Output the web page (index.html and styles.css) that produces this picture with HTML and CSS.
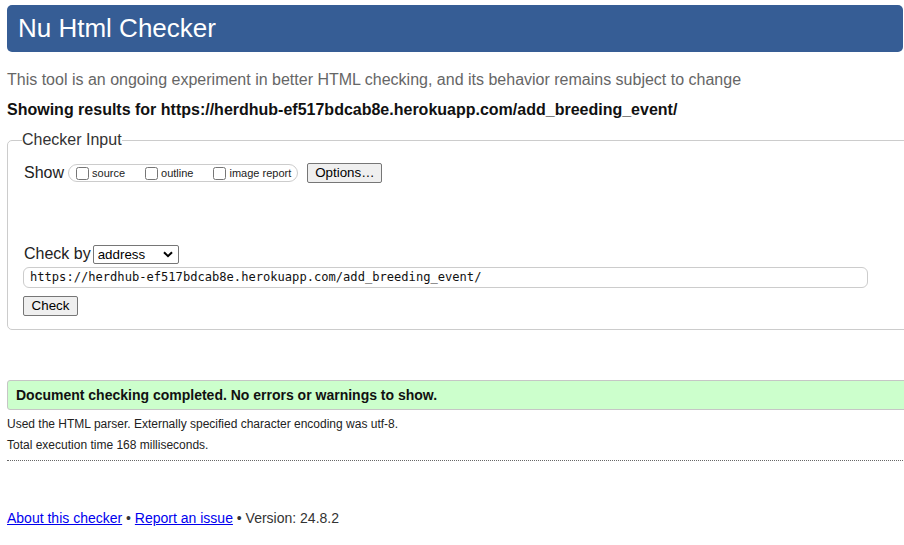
FILE: index.html
```html
<!DOCTYPE html>
<html lang="en">
<head>
<meta charset="utf-8">
<title>Showing results for https://herdhub-ef517bdcab8e.herokuapp.com/add_breeding_event/ - Nu Html Checker</title>
<link rel="stylesheet" href="styles.css">
</head>
<body>
<div class="page">
  <h1 class="title">Nu Html Checker</h1>
  <p class="intro">This tool is an ongoing experiment in better HTML checking, and its behavior remains subject to change</p>
  <p class="showing">Showing results for https://herdhub-ef517bdcab8e.herokuapp.com/add_breeding_event/</p>
  <form class="checker">
    <fieldset class="inputs">
      <legend class="legend">Checker Input</legend>
      <div class="show-row">
        <span class="lbl">Show</span>
        <span class="pill">
          <label class="opt"><input type="checkbox" class="cb"><span>source</span></label>
          <label class="opt"><input type="checkbox" class="cb"><span>outline</span></label>
          <label class="opt last"><input type="checkbox" class="cb"><span>image report</span></label>
        </span>
        <button type="button" class="btn options">Options…</button>
      </div>
      <div class="by-row">
        <span class="lbl">Check by</span>
        <span class="select">address<svg class="chev" width="10" height="7" viewBox="0 0 10 7"><path d="M1 1.2 L5 5.2 L9 1.2" fill="none" stroke="#000" stroke-width="2"/></svg></span>
      </div>
      <div class="url">https://herdhub-ef517bdcab8e.herokuapp.com/add_breeding_event/</div>
      <div class="submit-row"><button type="button" class="btn check">Check</button></div>
    </fieldset>
  </form>
  <div class="success">Document checking completed. No errors or warnings to show.</div>
  <p class="meta first">Used the HTML parser. Externally specified character encoding was utf-8.</p>
  <p class="meta">Total execution time 168 milliseconds.</p>
  <hr class="dotted">
  <p class="footer"><a href="#" class="link">About this checker</a> • <a href="#" class="link">Report an issue</a> • Version: 24.8.2</p>
</div>
</body>
</html>
```
FILE: styles.css
```css
html, body {
  margin: 0;
  padding: 0;
  overflow: hidden;
  background: #fff;
}
body {
  font-family: "Liberation Sans", Arial, sans-serif;
  color: #222;
}
.page {
  box-sizing: border-box;
  padding: 5px 0 0 7px;
  width: 904px;
  overflow: hidden;
}
.title {
  box-sizing: border-box;
  width: 896px;
  height: 47px;
  margin: 0;
  padding: 0 0 0 11px;
  background: #365d95;
  color: #fff;
  font-weight: normal;
  font-size: 26px;
  line-height: 47px;
  border-radius: 5px;
}
.intro {
  margin: 19px 0 0 0;
  font-size: 16px;
  line-height: 18px;
  color: #666;
}
.showing {
  margin: 12px 0 0 0;
  font-size: 16px;
  line-height: 18px;
  font-weight: bold;
  color: #111;
}
.checker {
  margin: 12px 0 0 0;
}
.inputs {
  margin: 0;
  padding: 14px 16px 13px 16px;
  border: 1px solid #ccc;
  border-radius: 5px;
  min-width: 0;
  width: 1000px;
}
.legend {
  padding: 0;
  margin-left: -2px;
  font-size: 16px;
  line-height: 18px;
  color: #333;
}
.show-row {
  display: flex;
  align-items: center;
  height: 20px;
}
.lbl {
  font-size: 16px;
  line-height: 18px;
  color: #222;
}
.pill {
  display: flex;
  align-items: center;
  box-sizing: border-box;
  height: 18px;
  margin-left: 4px;
  padding: 0 6px 0 3px;
  border: 1px solid #ccc;
  border-radius: 9px;
}
.opt {
  display: flex;
  align-items: center;
  font-size: 11px;
  color: #222;
  margin-right: 16px;
}
.opt.last {
  margin-right: 0;
}
.cb {
  width: 13px;
  height: 13px;
  margin: 0 3px 0 4px;
}
.btn {
  box-sizing: border-box;
  height: 20px;
  border: 1px solid #767676;
  border-radius: 2px;
  background: #efefef;
  color: #000;
  font-family: "Liberation Sans", Arial, sans-serif;
  font-size: 13.33px;
  line-height: 16px;
  padding: 0 7px;
}
.options {
  margin-left: 9px;
  width: 75px;
}
.by-row {
  display: flex;
  align-items: center;
  margin-top: 61px;
  height: 20px;
}
.select {
  display: flex;
  align-items: center;
  justify-content: space-between;
  box-sizing: border-box;
  width: 86px;
  height: 19px;
  margin-left: 2px;
  padding: 0 5px 0 4px;
  border: 1px solid #767676;
  border-radius: 2px;
  font-size: 13.33px;
  color: #000;
}
.chev {
  display: block;
}
.url {
  box-sizing: border-box;
  width: 845px;
  height: 21px;
  margin: 3px 0 0 -1px;
  padding: 0 0 0 6px;
  border: 1px solid #ccc;
  border-radius: 6px;
  font-family: "DejaVu Sans Mono", "Liberation Mono", monospace;
  font-size: 12.1px;
  line-height: 19px;
  color: #111;
}
.submit-row {
  margin-top: 8px;
  margin-left: -1px;
  display: flex;
}
.check {
  width: 55px;
  padding: 0;
}
.success {
  box-sizing: border-box;
  width: 1000px;
  height: 30px;
  margin-top: 50px;
  padding: 0 0 0 8px;
  background: #ccffcc;
  border: 1px solid #c6c6c6;
  border-radius: 3px;
  font-size: 14px;
  font-weight: bold;
  line-height: 28px;
  color: #111;
}
.meta {
  margin: 0;
  font-size: 12px;
  line-height: 14px;
  color: #222;
}
.meta.first {
  margin-top: 7px;
}
.meta + .meta {
  margin-top: 7px;
}
.dotted {
  width: 896px;
  margin: 8px 0 0 0;
  border: 0;
  border-top: 1px dotted #666;
  height: 0;
}
.footer {
  margin: 49px 0 0 0;
  font-size: 14px;
  line-height: 16px;
  color: #333;
}
.link {
  color: #0000ee;
  text-decoration: underline;
}
```
